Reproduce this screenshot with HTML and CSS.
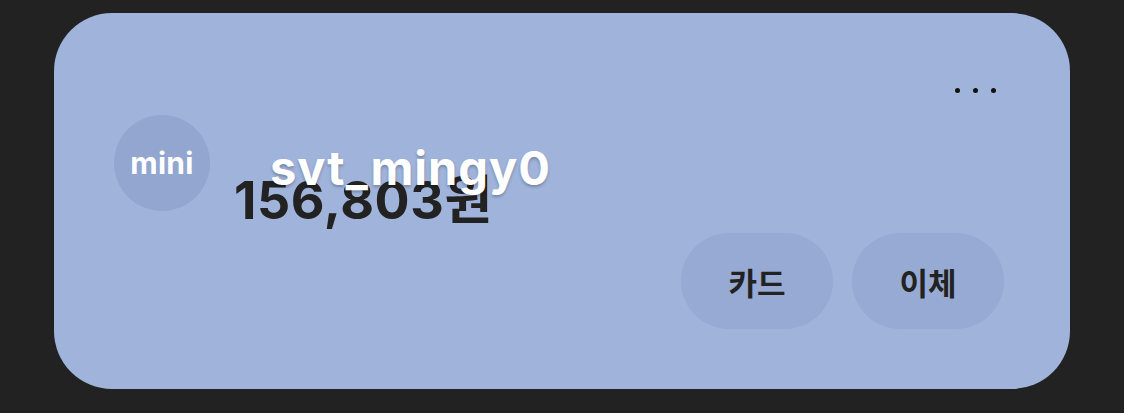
FILE: index.html
```html
<!DOCTYPE html>
<html lang="ko">
<head>
    <meta charset="UTF-8">
    <meta name="viewport" content="width=device-width, initial-scale=1.0">
    <title>Account Card</title>
    <link rel="stylesheet" href="styles.css">
</head>
<body>
    <div class="card">
        <div class="card-top">
            <button class="more-btn" aria-label="더보기">
                <span class="dot"></span>
                <span class="dot"></span>
                <span class="dot"></span>
            </button>
        </div>

        <div class="profile">
            <div class="avatar">mini</div>
            <div class="balance">
                <div class="account-name">svt_mingy0</div>
                <div class="amount">156,803원</div>
            </div>
        </div>

        <div class="actions">
            <button class="pill-btn">카드</button>
            <button class="pill-btn">이체</button>
        </div>
    </div>
</body>
</html>
```

FILE: styles.css
```css
body {
    margin: 0;
    background: #222222;
    font-family: 'Inter', 'Noto Sans CJK KR', sans-serif;
    width: 1124px;
    height: 413px;
    overflow: hidden;
}

.card {
    box-sizing: border-box;
    width: 1016px;
    height: 376px;
    margin: 13px 0 0 54px;
    padding: 0 66px 60px 60px;
    background: #9fb3db;
    border-radius: 58px;
    display: flex;
    flex-direction: column;
}

.card-top {
    display: flex;
    justify-content: flex-end;
    padding-top: 75px;
}

.more-btn {
    display: flex;
    gap: 13px;
    padding: 0;
    margin-right: 8px;
    border: none;
    background: none;
    cursor: pointer;
}

.dot {
    width: 5px;
    height: 5px;
    border-radius: 50%;
    background: #111;
}

.profile {
    display: flex;
    align-items: flex-start;
    gap: 24px;
    margin-top: 22px;
}

.avatar {
    width: 96px;
    height: 96px;
    border-radius: 50%;
    background: #93a6cf;
    color: #fff;
    font-size: 30px;
    font-weight: 700;
    letter-spacing: 0.3px;
    display: flex;
    align-items: center;
    justify-content: center;
    flex-shrink: 0;
}

.balance {
    margin-top: 30px;
    display: flex;
    flex-direction: column;
}

.account-name {
    font-size: 47px;
    line-height: 46px;
    font-weight: 700;
    color: #fff;
    margin-left: 36px;
    letter-spacing: 1px;
    text-shadow: 0 2px 3px rgba(0, 0, 0, 0.25);
    position: relative;
    z-index: 1;
}

.amount {
    font-size: 52px;
    line-height: 52px;
    font-weight: 700;
    color: #222;
    margin-top: -16px;
    letter-spacing: 0.6px;
}

.actions {
    margin-top: auto;
    display: flex;
    justify-content: flex-end;
    gap: 19px;
}

.pill-btn {
    width: 152px;
    height: 96px;
    border: none;
    border-radius: 48px;
    background: #97aad3;
    color: #222;
    font-family: 'Noto Sans CJK KR', sans-serif;
    font-size: 31px;
    font-weight: 700;
    cursor: pointer;
}
```
